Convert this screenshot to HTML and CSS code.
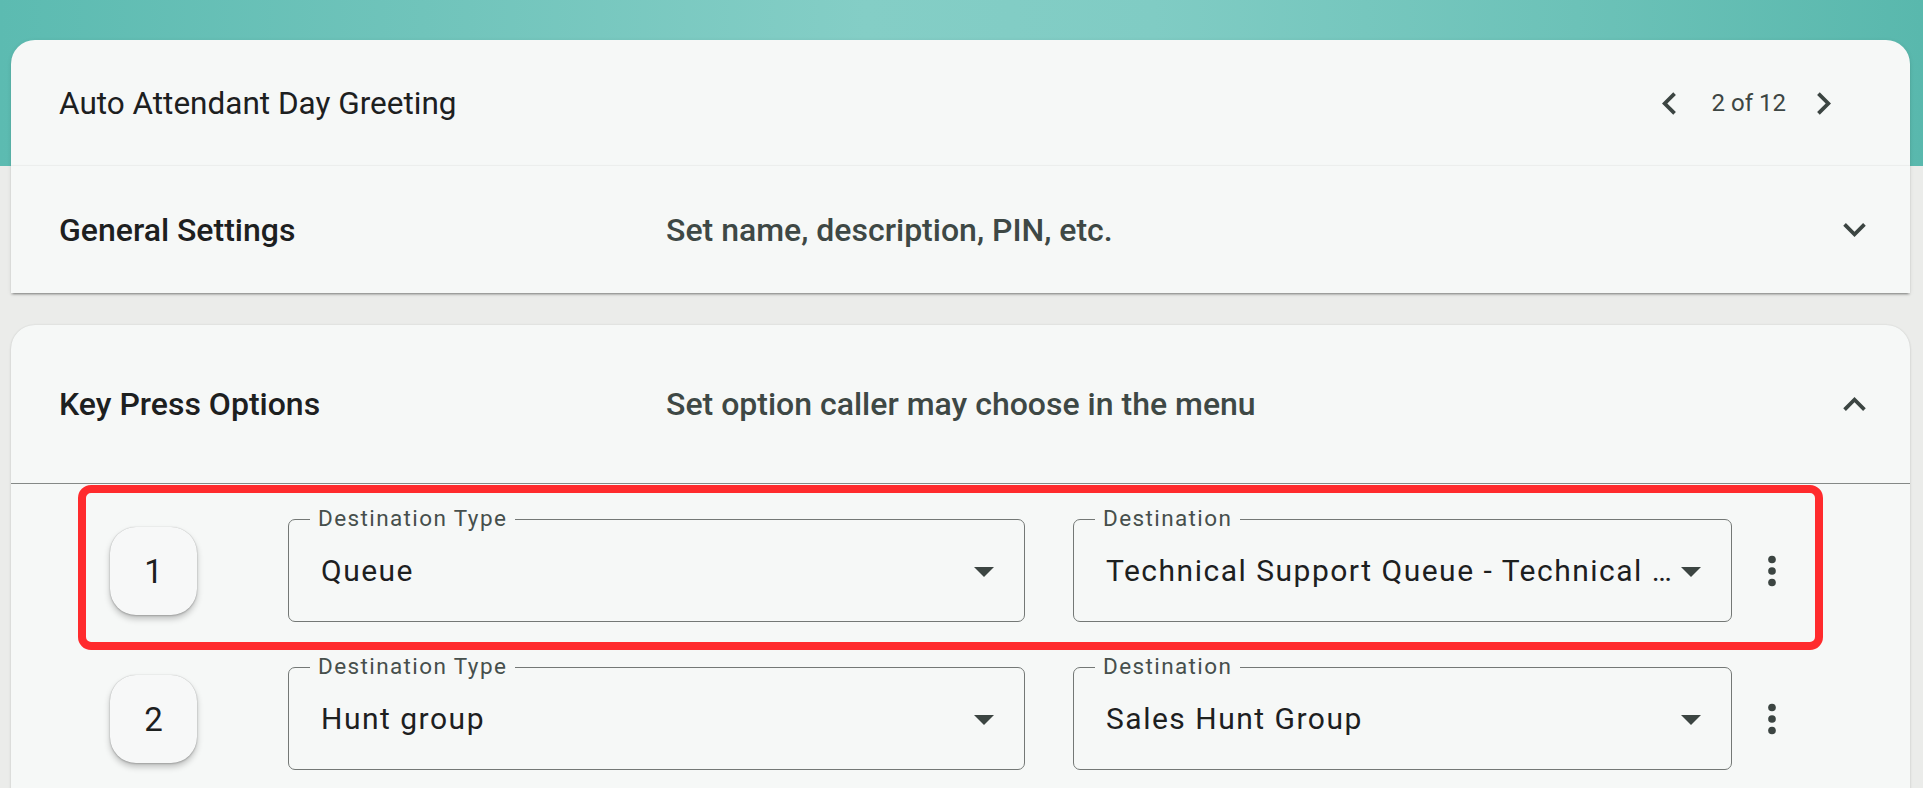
FILE: index.html
```html
<!DOCTYPE html>
<html lang="en">
<head>
<meta charset="utf-8">
<title>Auto Attendant Day Greeting</title>
<link rel="stylesheet" href="styles.css">
</head>
<body>
<div class="page">
  <section class="card top-card">
    <header class="title-bar">
      <h1 class="title">Auto Attendant Day Greeting</h1>
      <nav class="pager">
        <button class="icon-btn" aria-label="Previous">
          <svg viewBox="0 0 24 24"><path d="M15.41 7.41 14 6l-6 6 6 6 1.41-1.41L10.83 12z"/></svg>
        </button>
        <span class="pager-text">2 of 12</span>
        <button class="icon-btn" aria-label="Next">
          <svg viewBox="0 0 24 24"><path d="M10 6 8.59 7.41 13.17 12l-4.58 4.59L10 18l6-6z"/></svg>
        </button>
      </nav>
    </header>
    <div class="summary general-summary">
      <h2 class="summary-heading">General Settings</h2>
      <p class="summary-sub">Set name, description, PIN, etc.</p>
      <span class="expand-icon">
        <svg viewBox="0 0 24 24"><path d="M16.59 8.59 12 13.17 7.41 8.59 6 10l6 6 6-6z"/></svg>
      </span>
    </div>
  </section>

  <section class="card key-card">
    <div class="summary key-summary">
      <h2 class="summary-heading">Key Press Options</h2>
      <p class="summary-sub">Set option caller may choose in the menu</p>
      <span class="expand-icon">
        <svg viewBox="0 0 24 24"><path d="m12 8-6 6 1.41 1.41L12 10.83l4.59 4.58L18 14z"/></svg>
      </span>
    </div>
    <div class="rows">
      <div class="row highlighted">
        <div class="key-bubble">1</div>
        <div class="select select-type">
          <span class="select-label">Destination Type</span>
          <span class="select-value">Queue</span>
          <svg class="select-arrow" viewBox="7 10 10 5"><path d="M7 10l5 5 5-5z"/></svg>
        </div>
        <div class="select select-dest">
          <span class="select-label">Destination</span>
          <span class="select-value">Technical Support Queue - Technical ...</span>
          <svg class="select-arrow" viewBox="7 10 10 5"><path d="M7 10l5 5 5-5z"/></svg>
        </div>
        <span class="more-icon">
          <svg viewBox="0 0 24 24"><circle cx="12" cy="6" r="2"/><circle cx="12" cy="12" r="2"/><circle cx="12" cy="18" r="2"/></svg>
        </span>
      </div>
      <div class="row">
        <div class="key-bubble">2</div>
        <div class="select select-type">
          <span class="select-label">Destination Type</span>
          <span class="select-value">Hunt group</span>
          <svg class="select-arrow" viewBox="7 10 10 5"><path d="M7 10l5 5 5-5z"/></svg>
        </div>
        <div class="select select-dest">
          <span class="select-label">Destination</span>
          <span class="select-value">Sales Hunt Group</span>
          <svg class="select-arrow" viewBox="7 10 10 5"><path d="M7 10l5 5 5-5z"/></svg>
        </div>
        <span class="more-icon">
          <svg viewBox="0 0 24 24"><circle cx="12" cy="6" r="2"/><circle cx="12" cy="12" r="2"/><circle cx="12" cy="18" r="2"/></svg>
        </span>
      </div>
    </div>
  </section>
</div>
</body>
</html>
```

FILE: styles.css
```css
html, body {
  margin: 0;
  height: 788px;
  overflow: hidden;
}

body {
  font-family: Roboto, "Liberation Sans", sans-serif;
  color: #1d201f;
  background:
    linear-gradient(90deg, #5cbbb1 0%, #70c4bb 22%, #84cec6 45%, #80ccc4 60%, #6cc2b8 82%, #59b8ad 100%) top left / 100% 166px no-repeat,
    #ebecea;
}

.page {
  padding: 40px 13px 0 11px;
  display: flex;
  flex-direction: column;
  gap: 32px;
}

.card {
  background: #f6f8f7;
}

.top-card {
  border-radius: 24px 24px 0 0;
  box-shadow: 0 3px 2px -2px rgba(0, 0, 0, 0.28), 0 2px 2px rgba(0, 0, 0, 0.12), 0 1px 5px rgba(0, 0, 0, 0.08);
}

.key-card {
  border-radius: 24px 24px 0 0;
  box-shadow: 0 1px 3px rgba(0, 0, 0, 0.12), 0 0 2px rgba(0, 0, 0, 0.08);
}

/* title bar */
.title-bar {
  height: 126px;
  display: flex;
  align-items: center;
  padding: 0 64px 0 48px;
}

.title {
  flex: 1;
  margin: 0;
  font-size: 31.5px;
  font-weight: 400;
  color: #1d201f;
}

.pager {
  display: flex;
  align-items: center;
}

.icon-btn {
  width: 45px;
  height: 45px;
  padding: 0;
  border: 0;
  background: none;
  display: flex;
}

.icon-btn svg,
.expand-icon svg,
.more-icon svg {
  width: 100%;
  height: 100%;
  fill: #3c4542;
}

.pager-text {
  margin: 0 15px 0 20px;
  font-size: 24px;
  color: #3d4643;
}

/* accordion summaries */
.summary {
  display: flex;
  align-items: center;
  padding: 0 33px 0 48px;
}

.general-summary {
  height: 127px;
  box-shadow: 0 -1px 1px rgba(0, 0, 0, 0.04);
}

.key-summary {
  height: 158px;
  border-bottom: 1px solid #858987;
}

.summary-heading {
  flex: 0 0 607px;
  margin: 0;
  font-size: 32px;
  font-weight: 500;
  color: #1d201f;
}

.summary-sub {
  flex: 1;
  margin: 0;
  font-size: 32px;
  font-weight: 500;
  color: #3e4845;
}

.expand-icon {
  width: 45px;
  height: 45px;
  display: flex;
}

/* key rows */
.rows {
  display: flex;
  flex-direction: column;
  gap: 45px;
  padding: 35px 0 20px 99px;
}

.row {
  position: relative;
  height: 103px;
  display: flex;
  align-items: center;
}

.row.highlighted::after {
  content: "";
  position: absolute;
  left: -32px;
  right: 87px;
  top: -34px;
  bottom: -28px;
  border: 8px solid #ff2b2d;
  border-radius: 13px;
  pointer-events: none;
}

.key-bubble {
  width: 87px;
  height: 88px;
  margin-right: 91px;
  border-radius: 26px;
  background: #f7f8f8;
  box-shadow: 0 4px 6px rgba(0, 0, 0, 0.22), 0 1px 2px rgba(0, 0, 0, 0.18), 0 0 1px rgba(0, 0, 0, 0.25);
  display: flex;
  align-items: center;
  justify-content: center;
  font-size: 33px;
  color: #1d201f;
  box-sizing: border-box;
  padding-top: 2px;
}

.select {
  position: relative;
  height: 103px;
  box-sizing: border-box;
  border: 1px solid #747876;
  border-radius: 7px;
  display: flex;
  align-items: center;
  padding: 0 30px 0 32px;
}

.select-type {
  width: 737px;
  margin-right: 48px;
}

.select-dest {
  width: 659px;
}

.select-label {
  position: absolute;
  left: 21px;
  top: -15px;
  padding: 0 8px;
  background: #f6f8f7;
  font-size: 22.5px;
  line-height: 26px;
  letter-spacing: 1.4px;
  color: #464f4c;
}

.select-value {
  flex: 1;
  min-width: 0;
  overflow: hidden;
  white-space: nowrap;
  text-overflow: ellipsis;
  font-size: 30px;
  letter-spacing: 1.5px;
  color: #1d201f;
}

.select-arrow {
  flex: 0 0 20px;
  width: 20px;
  height: 10px;
  margin-left: 2px;
  margin-top: 3px;
  fill: #3c4542;
}

.more-icon {
  width: 46px;
  height: 46px;
  margin-left: 17px;
  display: flex;
}
```
